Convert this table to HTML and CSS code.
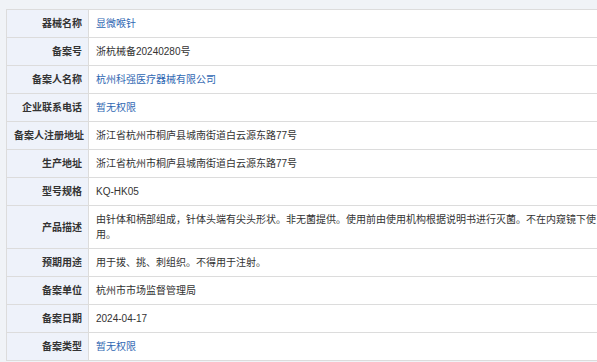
FILE: index.html
```html
<!DOCTYPE html>
<html lang="zh-CN">
<head>
<meta charset="utf-8">
<title>器械详情</title>
<link rel="stylesheet" href="styles.css">
</head>
<body>
<div class="page">
  <table class="info">
    <tr><th>器械名称</th><td><a class="link">显微喉针</a></td></tr>
    <tr><th>备案号</th><td>浙杭械备20240280号</td></tr>
    <tr><th>备案人名称</th><td><a class="link">杭州科强医疗器械有限公司</a></td></tr>
    <tr><th>企业联系电话</th><td><a class="link">暂无权限</a></td></tr>
    <tr><th>备案人注册地址</th><td>浙江省杭州市桐庐县城南街道白云源东路77号</td></tr>
    <tr><th>生产地址</th><td>浙江省杭州市桐庐县城南街道白云源东路77号</td></tr>
    <tr><th>型号规格</th><td>KQ-HK05</td></tr>
    <tr><th>产品描述</th><td>由针体和柄部组成，针体头端有尖头形状。非无菌提供。使用前由使用机构根据说明书进行灭菌。不在内窥镜下使用。</td></tr>
    <tr><th>预期用途</th><td>用于拨、挑、刺组织。不得用于注射。</td></tr>
    <tr><th>备案单位</th><td>杭州市市场监督管理局</td></tr>
    <tr><th>备案日期</th><td>2024-04-17</td></tr>
    <tr><th>备案类型</th><td><a class="link">暂无权限</a></td></tr>
  </table>
</div>
</body>
</html>
```

FILE: styles.css
```css
html, body {
  margin: 0;
  padding: 0;
  background: #f0f3f7;
  overflow: hidden;
}
.page {
  padding: 9px 0 0 6px;
  width: 620px;
}
.info {
  width: 600px;
  border-collapse: collapse;
  table-layout: fixed;
  font-family: "Liberation Sans", "Noto Sans CJK SC", sans-serif;
  font-size: 10px;
  line-height: 15px;
  color: #333;
  background: #fff;
}
.info th, .info td {
  border: 1px solid #dcdcdc;
  padding: 6px 7px;
  vertical-align: middle;
}
.info th {
  width: 68px;
  padding: 6px 6px 6px 7px;
  text-align: right;
  font-weight: bold;
  background: #eef2fa;
  color: #333;
  white-space: nowrap;
}
.info td {
  text-align: left;
  padding-right: 4px;
}
.link {
  color: #2f67b2;
  text-decoration: none;
}
```
